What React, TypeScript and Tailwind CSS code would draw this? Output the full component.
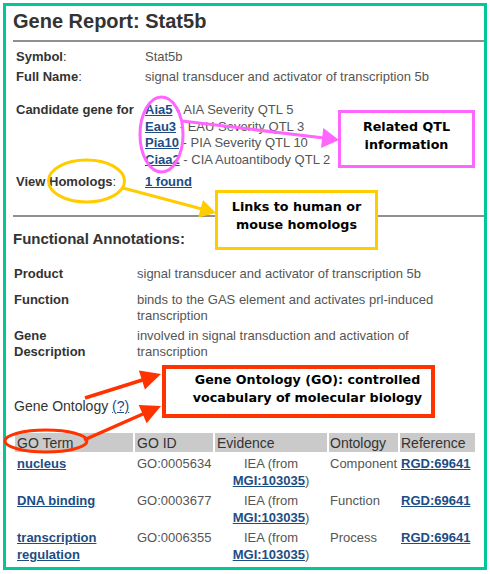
import React from "react";

const link = "font-bold text-[#1c4d85] underline";
const label = "font-bold text-[#333]";
const value = "text-[#555]";

const TopRow = ({ name, children, className = "" }: { name: string; children: React.ReactNode; className?: string }) => (
  <div className={"flex pl-[3px] " + className}>
    <div className={"w-[129px] shrink-0 " + label}>
      {name}
      <span className="font-normal">:</span>
    </div>
    <div className={value}>{children}</div>
  </div>
);

const AnnRow = ({ name, children, className = "" }: { name: string; children: React.ReactNode; className?: string }) => (
  <div className={"flex pl-[1px] leading-[16px] " + className}>
    <div className={"w-[123px] shrink-0 pr-[30px] " + label}>{name}</div>
    <div className={"w-[338px] " + value}>{children}</div>
  </div>
);

const qtl = [
  { sym: "Aia5", desc: "AIA Severity QTL 5" },
  { sym: "Eau3", desc: "EAU Severity QTL 3" },
  { sym: "Pia10", desc: "PIA Severity QTL 10" },
  { sym: "Ciaa2", desc: "CIA Autoantibody QTL 2" },
];

const goRows = [
  { term: "nucleus", id: "GO:0005634", onto: "Component" },
  { term: "DNA binding", id: "GO:0003677", onto: "Function" },
  { term: "transcription regulation", id: "GO:0006355", onto: "Process" },
];

const Overlay = () => (
  <svg className="absolute left-0 top-0 pointer-events-none" width="490" height="574" viewBox="0 0 490 574">
    {/* pink: QTL links */}
    <ellipse cx="161.5" cy="134.5" rx="21.5" ry="37.5" fill="none" stroke="#ff66ff" strokeWidth="3" />
    <line x1="182" y1="121" x2="324" y2="138" stroke="#ff66ff" strokeWidth="3" />
    <polygon points="339,140 323.3,128.1 321,147.9" fill="#ff66ff" />

    {/* yellow: homologs */}
    <ellipse cx="86.5" cy="181" rx="38" ry="21" fill="none" stroke="#ffcc00" strokeWidth="3" />
    <line x1="123" y1="188" x2="202" y2="209" stroke="#ffcc00" strokeWidth="3" />
    <polygon points="216,213 203,200.1 198.2,217.5" fill="#ffcc00" />

    {/* red: gene ontology */}
    <ellipse cx="46" cy="441" rx="41" ry="11" fill="none" stroke="#ff3300" strokeWidth="3" />
    <line x1="85" y1="398" x2="144" y2="379.5" stroke="#ff3300" strokeWidth="3.5" />
    <polygon points="161,374 144.9,389.5 138.9,370.5" fill="#ff3300" />
    <line x1="84" y1="440" x2="144" y2="413.5" stroke="#ff3300" strokeWidth="3.5" />
    <polygon points="161,406 146.7,423.3 138.7,404.9" fill="#ff3300" />
  </svg>
);

const callout = "absolute bg-white text-center text-black font-bold text-[12.7px] leading-[18px] font-['DejaVu_Sans',Verdana,sans-serif]";

export default function App() {
  return (
    <div className="relative w-[490px] h-[574px] bg-white font-['Liberation_Sans',Arial,sans-serif] text-[13px] overflow-hidden">
      <div className="ml-[3px] mt-[3px] w-[484px] h-[567px] border-[3px] border-[#00c896]">
        <div className="pl-[7px] pt-[4px]">
          <h1 className="text-[20px] leading-[23px] font-bold text-[#333]">Gene Report: Stat5b</h1>
          <div className="mt-[7px] h-[2px] bg-[#8f8f8f]" />

          <div className="leading-[20px]">
            <TopRow name="Symbol" className="mt-[5px]">Stat5b</TopRow>
            <TopRow name="Full Name">signal transducer and activator of transcription 5b</TopRow>
          </div>

          <div className="flex pl-[3px] mt-[15px] leading-[16.5px]">
            <div className={"w-[129px] shrink-0 " + label}>Candidate gene for</div>
            <div className={value}>
              {qtl.map((q) => (
                <div key={q.sym}>
                  <a className={link}>{q.sym}</a> - {q.desc}
                </div>
              ))}
            </div>
          </div>

          <div className="leading-[20px]">
            <TopRow name="View Homologs" className="mt-[4px]">
              <a className={link}>1 found</a>
            </TopRow>
          </div>

          <div className="mt-[23px] h-[2px] bg-[#8f8f8f]" />

          <h2 className="mt-[13px] text-[15px] leading-[18px] font-bold text-[#333]">Functional Annotations:</h2>

          <AnnRow name="Product" className="mt-[17.5px]">signal transducer and activator of transcription 5b</AnnRow>
          <AnnRow name="Function" className="mt-[10px]">binds to the GAS element and activates prl-induced transcription</AnnRow>
          <AnnRow name="Gene Description" className="mt-[4px]">involved in signal transduction and activation of transcription</AnnRow>

          <div className="mt-[38.5px] pl-[1px] text-[14px] leading-[16px] text-[#333]">
            Gene Ontology <a className="text-[#1c4d85] underline">(?)</a>
          </div>

          <table className="mt-[17px] w-[464px] table-fixed border-separate border-spacing-[2px]">
            <colgroup>
              <col className="w-[118px]" />
              <col className="w-[78px]" />
              <col className="w-[112px]" />
              <col className="w-[69px]" />
              <col className="w-[75px]" />
            </colgroup>
            <thead>
              <tr className="bg-[#cacaca] text-[14px] leading-[16px] text-[#333] text-left">
                <th className="font-normal px-[2px] py-[1.5px]">GO Term</th>
                <th className="font-normal px-[2px] py-[1.5px]">GO ID</th>
                <th className="font-normal px-[2px] py-[1.5px]">Evidence</th>
                <th className="font-normal pl-[1px] py-[1.5px]">Ontology</th>
                <th className="font-normal pl-[1px] py-[1.5px]">Reference</th>
              </tr>
            </thead>
            <tbody className="leading-[17px] align-top">
              {goRows.map((r) => (
                <tr key={r.id}>
                  <td className="px-[2px] pt-[1px]">
                    <a className={link}>{r.term}</a>
                  </td>
                  <td className={"px-[2px] pt-[1px] " + value}>{r.id}</td>
                  <td className={"pt-[1px] text-center " + value}>
                    IEA (from
                    <br />
                    <a className={link}>MGI:103035</a>)
                  </td>
                  <td className={"pl-[1px] pt-[1px] " + value}>{r.onto}</td>
                  <td className="pl-[1px] pt-[1px]">
                    <a className={link}>RGD:69641</a>
                  </td>
                </tr>
              ))}
            </tbody>
          </table>
        </div>
      </div>

      <Overlay />

      <div className={callout + " left-[338px] top-[110px] w-[137px] h-[58px] border-[3px] border-[#ff66ff] pt-[5px]"}>
        Related QTL
        <br />
        information
      </div>
      <div className={callout + " left-[215px] top-[190px] w-[163px] h-[60px] border-[3px] border-[#ffcc00] pt-[5px]"}>
        Links to human or
        <br />
        mouse homologs
      </div>
      <div className={callout + " left-[162px] top-[365px] w-[273px] h-[53px] border-[4px] border-[#ff3300] pt-[2px] pl-[18px]"}>
        Gene Ontology (GO): controlled
        <br />
        vocabulary of molecular biology
      </div>
    </div>
  );
}
